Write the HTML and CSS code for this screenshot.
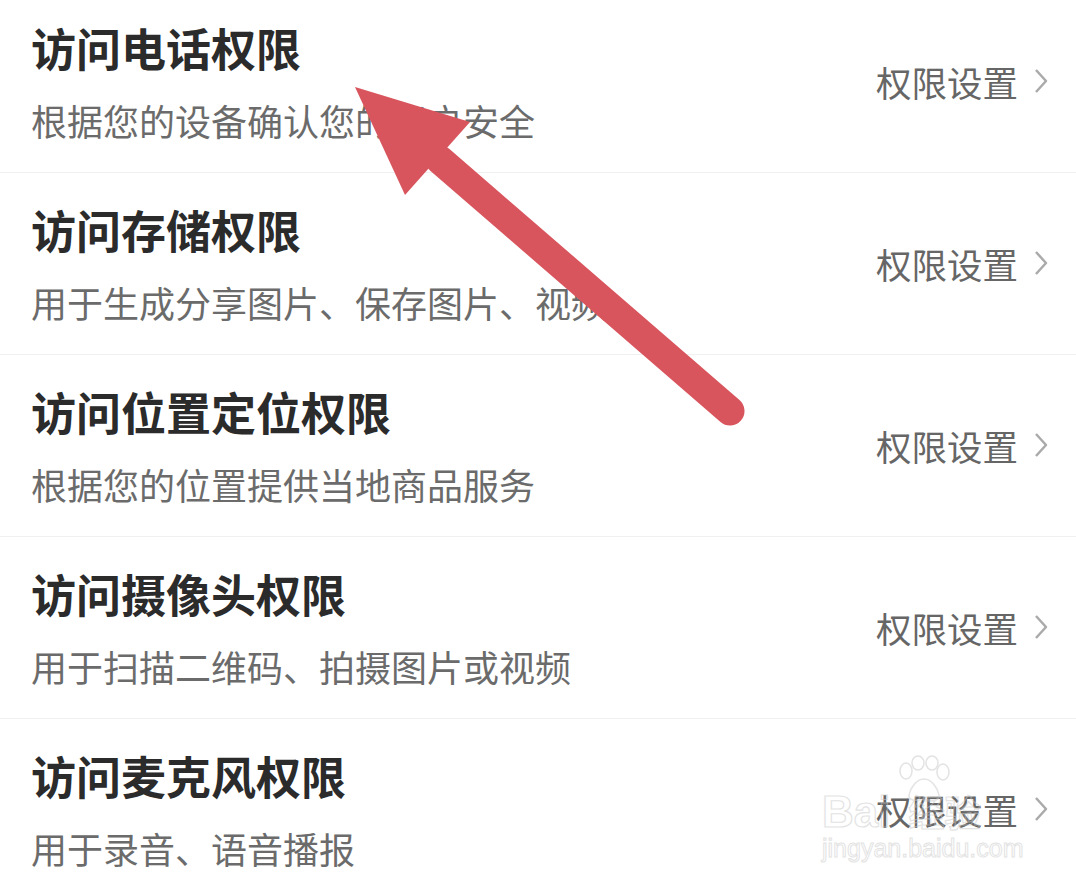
FILE: index.html
```html
<html>
    <head>
        <title>权限设置</title>
        <link rel="stylesheet" href="styles.css">
    </head>
    <body>
        <ul class="perms">
            <li class="perm">
                <div class="perm-text">
                    <div class="perm-title">访问电话权限</div>
                    <div class="perm-desc">根据您的设备确认您的账户安全</div>
                </div>
                <div class="perm-action">权限设置<svg class="chev" width="14" height="26" viewBox="0 0 14 26"><path d="M2 2 L12 13 L2 24" /></svg></div>
            </li>
            <li class="perm">
                <div class="perm-text">
                    <div class="perm-title">访问存储权限</div>
                    <div class="perm-desc">用于生成分享图片、保存图片、视频</div>
                </div>
                <div class="perm-action">权限设置<svg class="chev" width="14" height="26" viewBox="0 0 14 26"><path d="M2 2 L12 13 L2 24" /></svg></div>
            </li>
            <li class="perm">
                <div class="perm-text">
                    <div class="perm-title">访问位置定位权限</div>
                    <div class="perm-desc">根据您的位置提供当地商品服务</div>
                </div>
                <div class="perm-action">权限设置<svg class="chev" width="14" height="26" viewBox="0 0 14 26"><path d="M2 2 L12 13 L2 24" /></svg></div>
            </li>
            <li class="perm">
                <div class="perm-text">
                    <div class="perm-title">访问摄像头权限</div>
                    <div class="perm-desc">用于扫描二维码、拍摄图片或视频</div>
                </div>
                <div class="perm-action">权限设置<svg class="chev" width="14" height="26" viewBox="0 0 14 26"><path d="M2 2 L12 13 L2 24" /></svg></div>
            </li>
            <li class="perm">
                <div class="perm-text">
                    <div class="perm-title">访问麦克风权限</div>
                    <div class="perm-desc">用于录音、语音播报</div>
                </div>
                <div class="perm-action">权限设置<svg class="chev" width="14" height="26" viewBox="0 0 14 26"><path d="M2 2 L12 13 L2 24" /></svg></div>
            </li>
        </ul>

        <!-- annotation arrow drawn over the screenshot -->
        <svg class="arrow" width="1076" height="876" viewBox="0 0 1076 876">
            <line x1="730" y1="411" x2="440" y2="160" />
            <polygon points="355,87 470,122 405,195" />
        </svg>

        <div class="watermark">
            <svg class="paw" width="60" height="48" viewBox="0 0 60 48">
                <ellipse cx="12" cy="16" rx="6" ry="8" />
                <ellipse cx="24" cy="8" rx="6" ry="7" />
                <ellipse cx="38" cy="8" rx="6" ry="7" />
                <ellipse cx="49" cy="17" rx="6" ry="8" />
                <path d="M30 24 C22 24 16 34 15 40 C14 46 22 46 30 44 C38 46 46 46 45 40 C44 34 38 24 30 24 Z" />
            </svg>
            <div class="wm-brand">Bai<span class="wm-cn">经验</span></div>
            <div class="wm-url">jingyan.baidu.com</div>
        </div>
    </body>
</html>
```

FILE: styles.css
```css
body
{
    margin: 0;
    width: 1076px;
    height: 876px;
    overflow: hidden;
    position: relative;
    background-color: #ffffff;

    font-family: "Noto Sans CJK SC", "Noto Sans", sans-serif;
}

ul.perms
{
    list-style: none;
    margin: -9px 0 0 0;
    padding: 0;
}

li.perm
{
    display: flex;
    align-items: center;
    justify-content: space-between;
    height: 181px;
    padding: 0 28px 0 31px;
    border-bottom: 1px solid #f0f0f0;
}

.perm-text
{
    align-self: flex-start;
    padding-top: 32px;
}

.perm-title
{
    font-size: 45px;
    line-height: 50px;
    font-weight: 700;
    color: #2b2b2b;
}

.perm-desc
{
    margin-top: 25px;
    font-size: 36px;
    line-height: 44px;
    color: #6b6b6b;
}

.perm-action
{
    display: flex;
    align-items: center;
    gap: 16px;
    margin-top: -1px;
    font-size: 35.5px;
    color: #666666;
}

.chev path
{
    fill: none;
    stroke: #aaaaaa;
    stroke-width: 2.5;
    stroke-linejoin: round;
}

svg.arrow
{
    position: absolute;
    left: 0;
    top: 0;
}

svg.arrow line
{
    stroke: #d9555e;
    stroke-width: 29;
    stroke-linecap: round;
}

svg.arrow polygon
{
    fill: #d9555e;
}

.watermark
{
    position: absolute;
    left: 822px;
    top: 755px;
    width: 200px;
    color: transparent;
    font-family: "Liberation Sans", sans-serif;
    opacity: 0.5;
}

.paw
{
    display: block;
    margin-left: 72px;
}

.paw ellipse, .paw path
{
    fill: none;
    stroke: #c8c8c8;
    stroke-width: 1.5;
}

.wm-brand
{
    margin-top: -14px;
    font-size: 44px;
    line-height: 44px;
    font-weight: 700;
    -webkit-text-stroke: 1.2px #c8c8c8;
}

.wm-cn
{
    margin-left: 18px;
    font-family: "Noto Sans CJK SC", sans-serif;
    font-size: 36px;
}

.wm-url
{
    font-size: 25px;
    line-height: 28px;
    -webkit-text-stroke: 1px #c8c8c8;
}
```
